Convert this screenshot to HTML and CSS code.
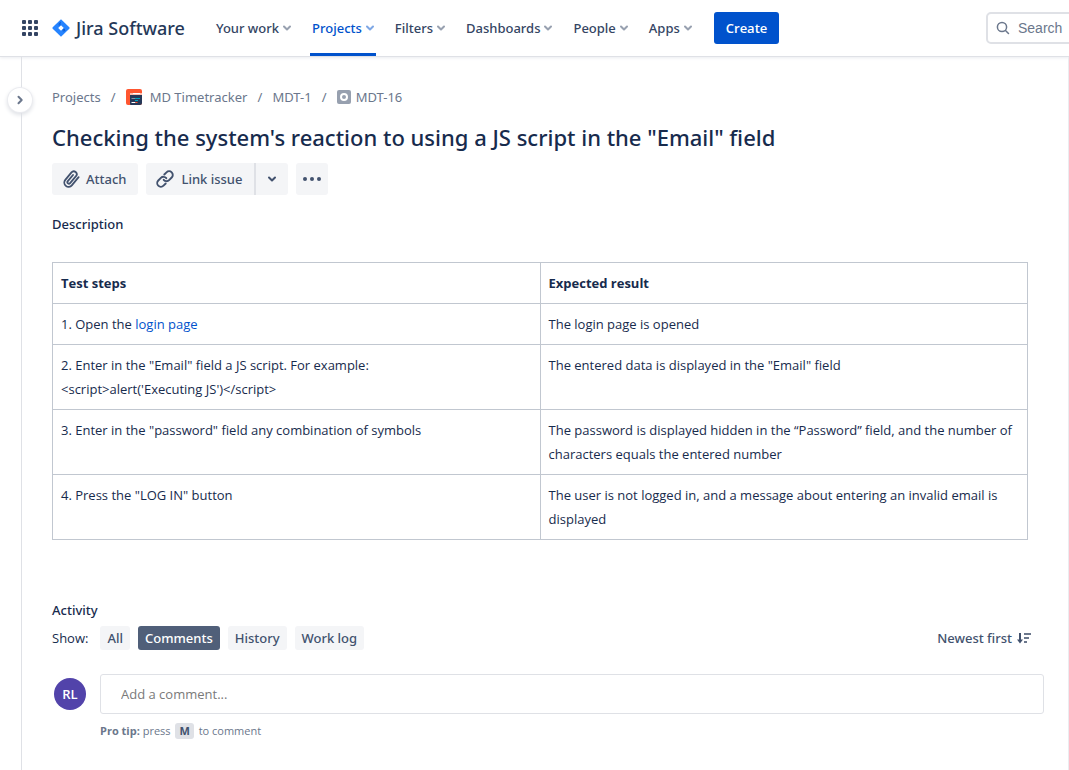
FILE: index.html
```html
<!DOCTYPE html>
<html lang="en">
<head>
<meta charset="utf-8">
<meta name="viewport" content="width=device-width, initial-scale=1">
<title>MDT-16 - Jira Software</title>
<link rel="stylesheet" href="styles.css">
</head>
<body>
<header class="topbar">
  <button class="icon-button" aria-label="Switch to">
    <svg width="16" height="16" viewBox="0 0 16 16" fill="#344563"><rect width="4" height="4" rx="1"/><rect x="6" width="4" height="4" rx="1"/><rect x="12" width="4" height="4" rx="1"/><rect y="6" width="4" height="4" rx="1"/><rect x="6" y="6" width="4" height="4" rx="1"/><rect x="12" y="6" width="4" height="4" rx="1"/><rect y="12" width="4" height="4" rx="1"/><rect x="6" y="12" width="4" height="4" rx="1"/><rect x="12" y="12" width="4" height="4" rx="1"/></svg>
  </button>
  <a class="brand" href="#">
    <svg width="18" height="18" viewBox="0 0 18 18"><defs><linearGradient id="g1" x1="0.9" y1="0.2" x2="0.4" y2="0.7"><stop offset="0.1" stop-color="#0052cc"/><stop offset="1" stop-color="#2684ff"/></linearGradient></defs><path d="M9 0.3 17.3 8.3a1 1 0 0 1 0 1.4L9 17.8 0.7 9.7a1 1 0 0 1 0-1.4Z" fill="#2684ff"/><path d="M9 2.500a4 4 0 0 0 0 4L6.300 9 4.500 6.500Z" fill="url(#g1)"/><path d="M9 15.500a4 4 0 0 0 0-4L11.700 9l1.800 2.500Z" fill="url(#g1)"/><path d="m9 6.2 2.800 2.800L9 11.8 6.200 9Z" fill="#fff"/></svg>
    <span>Jira Software</span>
  </a>
  <nav class="nav">
    <button class="nav-item">Your work<svg class="chev" viewBox="0 0 8 6"><path d="m1 1.5 3 3 3-3"/></svg></button>
    <button class="nav-item nav-current">Projects<svg class="chev" viewBox="0 0 8 6"><path d="m1 1.5 3 3 3-3"/></svg></button>
    <button class="nav-item">Filters<svg class="chev" viewBox="0 0 8 6"><path d="m1 1.5 3 3 3-3"/></svg></button>
    <button class="nav-item">Dashboards<svg class="chev" viewBox="0 0 8 6"><path d="m1 1.5 3 3 3-3"/></svg></button>
    <button class="nav-item">People<svg class="chev" viewBox="0 0 8 6"><path d="m1 1.5 3 3 3-3"/></svg></button>
    <button class="nav-item">Apps<svg class="chev" viewBox="0 0 8 6"><path d="m1 1.5 3 3 3-3"/></svg></button>
  </nav>
  <button class="create">Create</button>
  <label class="search">
    <svg width="14" height="14" viewBox="0 0 14 14" fill="none" stroke="#6b778c" stroke-width="1.5" stroke-linecap="round"><circle cx="6" cy="6" r="4.6"/><path d="m9.5 9.5 3 3"/></svg>
    <input type="text" placeholder="Search" aria-label="Search">
  </label>
</header>
<div class="shell">
  <aside class="rail">
    <button class="expand" aria-label="Expand sidebar"><svg width="8" height="10" viewBox="0 0 8 10" fill="none" stroke="#6b778c" stroke-width="2" stroke-linecap="round" stroke-linejoin="round"><path d="m2.5 1.8 3.2 3.2-3.2 3.2"/></svg></button>
  </aside>
  <main class="issue">
    <nav class="crumbs" aria-label="Breadcrumbs">
      <a href="#">Projects</a><span class="slash">/</span>
      <a href="#" class="crumb-project"><svg width="16" height="16" viewBox="0 0 16 16"><rect width="16" height="16" rx="2" fill="#ff5630"/><path d="M4 4h12v10a2 2 0 0 1-2 2H5a1 1 0 0 1-1-1Z" fill="#253858"/><path d="M4 4h12v2H4Z" fill="#ffbdad"/><path d="M7 4.500h7" stroke="#fff"/><path d="M5.500 9.500h4" stroke="#8993a4"/><path d="M9 9.500h5M9 11.500h3" stroke="#00a3bf"/><path d="M5.500 13.500h4" stroke="#fff"/><path d="M9.500 13.500h2" stroke="#ff5630"/></svg>MD Timetracker</a><span class="slash">/</span>
      <a href="#">MDT-1</a><span class="slash">/</span>
      <a href="#" class="crumb-issue"><svg width="14" height="14" viewBox="0 0 14 14"><rect width="14" height="14" rx="2" fill="#97a0af"/><circle cx="7" cy="7" r="3" fill="none" stroke="#fff" stroke-width="2"/></svg>MDT-16</a>
    </nav>
    <h1 class="title">Checking the system's reaction to using a JS script in the "Email" field</h1>
    <div class="actions">
      <button class="action"><svg width="18" height="20" viewBox="0 0 18 20" fill="none" stroke="#42526e" stroke-width="1.8" stroke-linecap="round"><path d="m11 6-5.2 6.2a1.5 1.5 0 0 0 2.3 2L14 7.2a2.9 2.9 0 0 0-4.5-3.8l-6.200 7.500a4.200 4.200 0 0 0 6.500 5.400l6.800-8.100"/></svg>Attach</button>
      <div class="split">
        <button class="action"><svg width="18" height="18" viewBox="0 0 18 18" fill="none" stroke="#42526e" stroke-width="1.9" stroke-linecap="round"><path d="M8.300 4.500 10.500 2.300a3.600 3.600 0 0 1 5.200 5.200l-2.600 2.600a3.600 3.600 0 0 1-5.400-.3"/><path d="m9.700 13.500-2.200 2.200a3.600 3.600 0 0 1-5.200-5.200l2.600-2.600a3.600 3.600 0 0 1 5.400.3"/></svg>Link issue</button>
        <button class="action action-menu" aria-label="More link options"><svg width="10" height="8" viewBox="0 0 10 8" fill="none" stroke="#42526e" stroke-width="2" stroke-linecap="round" stroke-linejoin="round"><path d="m2 2.500 3 3 3-3"/></svg></button>
      </div>
      <button class="action action-more" aria-label="More actions"><svg width="18" height="4" viewBox="0 0 18 4" fill="#42526e"><circle cx="2" cy="2" r="2"/><circle cx="9" cy="2" r="2"/><circle cx="16" cy="2" r="2"/></svg></button>
    </div>
    <h2 class="heading">Description</h2>
    <table class="steps">
      <thead><tr><th>Test steps</th><th>Expected result</th></tr></thead>
      <tbody>
        <tr><td>1. Open the <a href="#">login page</a></td><td>The login page is opened</td></tr>
        <tr><td>2. Enter in the "Email" field a JS script. For example:<br>&lt;script&gt;alert('Executing JS')&lt;/script&gt;</td><td>The entered data is displayed in the "Email" field</td></tr>
        <tr><td>3. Enter in the "password" field any combination of symbols</td><td>The password is displayed hidden in the “Password” field, and the number of characters equals the entered number</td></tr>
        <tr><td>4. Press the "LOG IN" button</td><td>The user is not logged in, and a message about entering an invalid email is displayed</td></tr>
      </tbody>
    </table>
    <h2 class="heading">Activity</h2>
    <div class="filters">
      <span class="show">Show:</span>
      <button class="tab">All</button>
      <button class="tab tab-on">Comments</button>
      <button class="tab">History</button>
      <button class="tab">Work log</button>
      <button class="sort">Newest first<svg width="14" height="12" viewBox="0 0 14 12" fill="none" stroke="#6b778c" stroke-width="2"><path d="M3 1v8" stroke="#42526e"/><path d="M0 7.500h6L3 11.500Z" fill="#42526e" stroke="none"/><path d="M7 2h7M7 6h5M7 10h3"/></svg></button>
    </div>
    <div class="comment">
      <span class="avatar">RL</span>
      <div class="comment-main">
        <input class="comment-box" type="text" placeholder="Add a comment..." aria-label="Add a comment">
        <p class="tip"><strong>Pro tip:</strong> press <kbd>M</kbd> to comment</p>
      </div>
    </div>
  </main>
</div>
</body>
</html>
```
FILE: styles.css
```css
* { box-sizing: border-box; }
body {
  margin: 0;
  min-height: 100vh;
  display: flex;
  flex-direction: column;
  overflow-x: hidden;
  background: #fff;
  color: #172b4d;
  font: 13px/20px "Open Sans", "Noto Sans", sans-serif;
}
button, input { font: inherit; }
button {
  display: inline-flex;
  align-items: center;
  justify-content: center;
  border: 0;
  padding: 0;
  background: none;
  color: #42526e;
  font-family: "Noto Sans", sans-serif;
  font-weight: 500;
  white-space: nowrap;
}
a { color: #0052cc; text-decoration: none; }
svg { flex: none; display: block; }

.topbar {
  position: relative;
  display: flex;
  align-items: center;
  height: 56px;
  padding-left: 22px;
  box-shadow: 0 1px 0 #dfe1e6, 0 2px 3px #ebecf0;
}
.brand {
  display: flex;
  align-items: center;
  gap: 6px;
  margin: 0 29px 0 14px;
  color: #253858;
  font: 500 18px/24px "Noto Sans", sans-serif;
  white-space: nowrap;
}
.nav { display: flex; align-self: stretch; gap: 17px; }
.nav-item {
  gap: 4px;
  padding: 0 2px;
  border-top: 3px solid transparent;
  border-bottom: 3px solid transparent;
  color: #344563;
}
.nav-current { color: #0052cc; border-bottom-color: #0052cc; }
.chev {
  width: 8px;
  height: 6px;
  fill: none;
  stroke: currentColor;
  stroke-width: 2;
  stroke-linecap: round;
  stroke-linejoin: round;
  opacity: 0.5;
}
.create {
  height: 32px;
  margin-left: 20px;
  padding: 0 12px;
  border-radius: 3px;
  background: #0052cc;
  color: #fff;
  font-family: "Open Sans", sans-serif;
  font-weight: 600;
}
.search {
  display: flex;
  flex: none;
  align-items: center;
  gap: 8px;
  width: 90px;
  height: 32px;
  margin: 0 -7px 0 auto;
  padding-left: 8px;
  border: 2px solid #dfe1e6;
  border-radius: 5px;
}
.search input {
  width: 60px;
  padding: 0;
  border: 0;
  outline: 0;
  font: 14px/20px "Liberation Sans", sans-serif;
}
.search input::placeholder { color: #6b778c; }

.shell { display: flex; flex: 1; }
.rail {
  position: relative;
  flex: none;
  width: 22px;
  border-right: 1px solid #dfe1e6;
}
.expand {
  position: absolute;
  top: 32px;
  left: 8px;
  width: 24px;
  height: 24px;
  border-radius: 50%;
  background: #fff;
  box-shadow: 0 0 0 1px #ebecf0, 0 2px 4px 1px #dfe1e6;
}
.issue {
  flex: 1;
  padding: 31px 24px 24px 30px;
  border-right: 1px solid #ebecf0;
}
.crumbs { display: flex; align-items: center; font-family: "Noto Sans", sans-serif; }
.crumbs a { display: flex; align-items: center; color: #6b778c; }
.crumbs .crumb-project { gap: 8px; }
.crumbs .crumb-issue { gap: 5px; }
.slash { width: 25px; text-align: center; color: #6b778c; }
.title {
  margin: 16px 0 12px;
  font: 500 22px/28px "Noto Sans", sans-serif;
}
.actions { display: flex; gap: 8px; }
.action {
  height: 32px;
  gap: 6px;
  padding: 0 12px 0 10px;
  border-radius: 3px;
  background: #f4f5f7;
}
.split { display: flex; }
.split .action:first-child { gap: 7px; border-radius: 3px 0 0 3px; }
.split .action-menu {
  padding: 0 11px;
  border-left: 2px solid #dfe1e6;
  border-radius: 0 3px 3px 0;
}
.action-more { padding: 0 7px; }
.heading { margin: 0; font: 500 13px/20px "Noto Sans", sans-serif; }
.actions + .heading { margin-top: 19px; }
.steps {
  width: calc(100% - 16px);
  margin: 28px 0 60px;
  border-collapse: collapse;
  table-layout: fixed;
  line-height: 24px;
}
.steps th, .steps td {
  padding: 8px;
  border: 1px solid #c1c7d0;
  text-align: left;
  vertical-align: top;
}
.steps th { font-weight: 700; }
.filters { display: flex; align-items: center; gap: 8px; margin-top: 6px; }
.show { margin-right: 4px; }
.tab {
  height: 24px;
  padding: 0 7px;
  border-radius: 3px;
  background: #f4f5f7;
}
.tab-on { background: #505f79; color: #fff; }
.sort { gap: 5px; margin: 0 13px 0 auto; }
.comment { display: flex; align-items: flex-start; gap: 14px; margin-top: 24px; }
.avatar {
  width: 32px;
  height: 32px;
  margin: 4px 0 0 2px;
  border-radius: 50%;
  background: #5243aa;
  color: #fff;
  font-weight: 600;
  line-height: 32px;
  text-align: center;
}
.comment-main { flex: 1; }
.comment-box {
  display: block;
  width: 100%;
  height: 40px;
  padding: 0 20px;
  border: 1px solid #dfe1e6;
  border-radius: 3px;
  color: #172b4d;
}
.comment-box::placeholder { color: #7a7a7a; }
.tip { margin: 8px 0 0; color: #6b778c; font-size: 11px; line-height: 18px; }
.tip kbd {
  display: inline-block;
  margin: 0 2px;
  padding: 0 4px;
  border-radius: 3px;
  background: #dfe1e6;
  color: #42526e;
  font: 700 11px/16px "Open Sans", sans-serif;
}
```
